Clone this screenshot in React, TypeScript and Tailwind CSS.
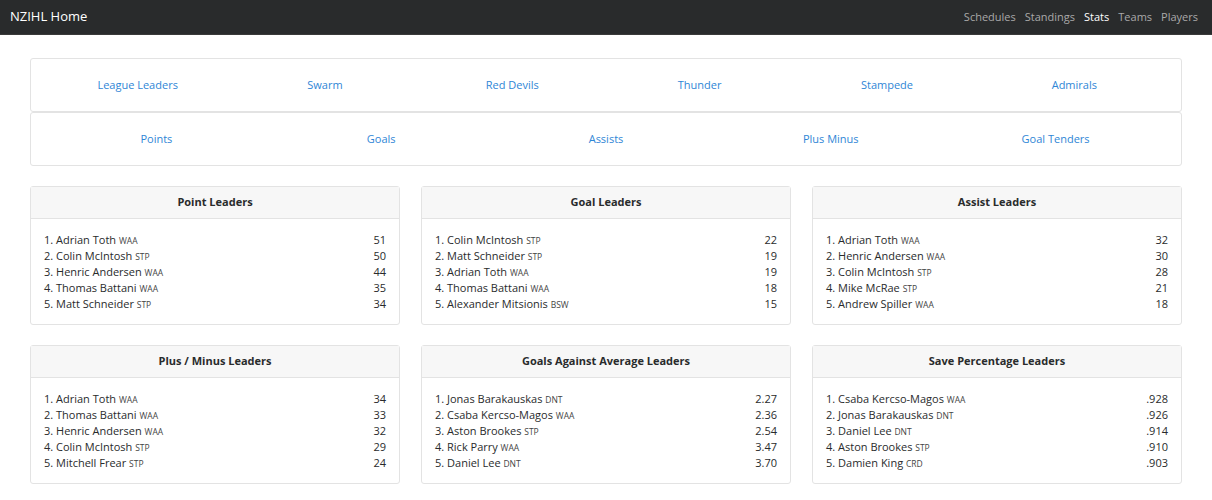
import React from 'react'

const TEAMS = ['League Leaders', 'Swarm', 'Red Devils', 'Thunder', 'Stampede', 'Admirals']
const CATEGORIES = ['Points', 'Goals', 'Assists', 'Plus Minus', 'Goal Tenders']
const NAV = ['Schedules', 'Standings', 'Stats', 'Teams', 'Players']

type Row = [string, string, string]

const BOARDS: { title: string; rows: Row[] }[] = [
  {
    title: 'Point Leaders',
    rows: [
      ['Adrian Toth', 'WAA', '51'],
      ['Colin McIntosh', 'STP', '50'],
      ['Henric Andersen', 'WAA', '44'],
      ['Thomas Battani', 'WAA', '35'],
      ['Matt Schneider', 'STP', '34'],
    ],
  },
  {
    title: 'Goal Leaders',
    rows: [
      ['Colin McIntosh', 'STP', '22'],
      ['Matt Schneider', 'STP', '19'],
      ['Adrian Toth', 'WAA', '19'],
      ['Thomas Battani', 'WAA', '18'],
      ['Alexander Mitsionis', 'BSW', '15'],
    ],
  },
  {
    title: 'Assist Leaders',
    rows: [
      ['Adrian Toth', 'WAA', '32'],
      ['Henric Andersen', 'WAA', '30'],
      ['Colin McIntosh', 'STP', '28'],
      ['Mike McRae', 'STP', '21'],
      ['Andrew Spiller', 'WAA', '18'],
    ],
  },
  {
    title: 'Plus / Minus Leaders',
    rows: [
      ['Adrian Toth', 'WAA', '34'],
      ['Thomas Battani', 'WAA', '33'],
      ['Henric Andersen', 'WAA', '32'],
      ['Colin McIntosh', 'STP', '29'],
      ['Mitchell Frear', 'STP', '24'],
    ],
  },
  {
    title: 'Goals Against Average Leaders',
    rows: [
      ['Jonas Barakauskas', 'DNT', '2.27'],
      ['Csaba Kercso-Magos', 'WAA', '2.36'],
      ['Aston Brookes', 'STP', '2.54'],
      ['Rick Parry', 'WAA', '3.47'],
      ['Daniel Lee', 'DNT', '3.70'],
    ],
  },
  {
    title: 'Save Percentage Leaders',
    rows: [
      ['Csaba Kercso-Magos', 'WAA', '.928'],
      ['Jonas Barakauskas', 'DNT', '.926'],
      ['Daniel Lee', 'DNT', '.914'],
      ['Aston Brookes', 'STP', '.910'],
      ['Damien King', 'CRD', '.903'],
    ],
  },
]

function LeaderCard({ title, rows }: { title: string; rows: Row[] }) {
  return (
    <div className="border border-[#e3e3e3] rounded-[3px] bg-white">
      <div className="h-[32px] flex items-center justify-center bg-[#f7f7f7] border-b border-[#e3e3e3] font-bold text-[11px] text-[#292b2c]">
        {title}
      </div>
      <ul className="px-[13px] pt-[13px] pb-[12px] text-[11px] text-[#292b2c]">
        {rows.map(([name, team, value], i) => (
          <li key={name} className="flex justify-between h-[16px] leading-[16px]">
            <span>
              {i + 1}. {name} <span className="text-[8.5px] leading-none text-[#444]">{team}</span>
            </span>
            <span>{value}</span>
          </li>
        ))}
      </ul>
    </div>
  )
}

export default function App() {
  return (
    <div className="min-h-[500px] bg-white font-['Open_Sans',sans-serif]">
      {/* Navbar */}
      <nav className="h-[35px] bg-[#292b2c] flex items-center justify-between px-[10px] border-b border-[#3a3a3a]">
        <span className="text-white text-[13px]">NZIHL Home</span>
        <div className="flex gap-[9px] pr-[4px] text-[11px]">
          {NAV.map((item) => (
            <span key={item} className={item === 'Stats' ? 'text-white' : 'text-[#a9a9a9]'}>
              {item}
            </span>
          ))}
        </div>
      </nav>

      <div className="px-[30px] pt-[23px]">
        {/* Team tabs */}
        <div className="border border-[#e3e3e3] rounded-[3px] h-[54px] px-[13px] grid grid-cols-6 items-center">
          {TEAMS.map((t) => (
            <a key={t} className="text-center text-[11px] text-[#2f86d6]">
              {t}
            </a>
          ))}
        </div>
        <div className="border border-[#e3e3e3] rounded-[3px] h-[54px] px-[13px] grid grid-cols-5 items-center">
          {CATEGORIES.map((c) => (
            <a key={c} className="text-center text-[11px] text-[#2f86d6]">
              {c}
            </a>
          ))}
        </div>

        {/* Leader cards */}
        <div className="mt-[20px] grid grid-cols-3 gap-x-[21px] gap-y-[20px]">
          {BOARDS.map((b) => (
            <LeaderCard key={b.title} title={b.title} rows={b.rows} />
          ))}
        </div>
      </div>
    </div>
  )
}
